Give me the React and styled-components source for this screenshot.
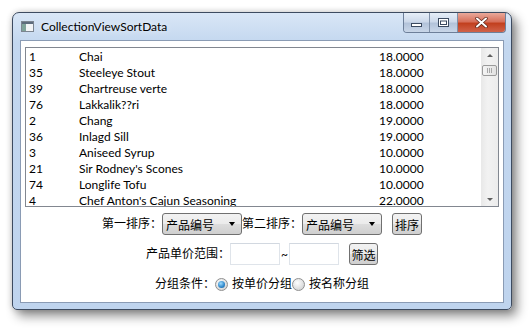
import React from 'react';
import styled, { createGlobalStyle } from 'styled-components';

const GlobalStyle = createGlobalStyle`
  html, body {
    margin: 0;
    padding: 0;
    background: #ffffff;
  }
  body {
    font: 12px "Lato", "Noto Sans CJK SC", sans-serif;
    color: #000;
  }
`;

const Desktop = styled.div`
  padding: 12px;
  width: 532px;
  height: 332px;
  box-sizing: border-box;
`;

const Window = styled.div`
  width: 500px;
  height: 298px;
  box-sizing: border-box;
  border: 1px solid #3d4b60;
  border-radius: 7px 7px 5px 5px;
  background: linear-gradient(#d9e6f6, #c3d7ef 30px, #bfd4ee);
  box-shadow: 5px 6px 11px rgba(0, 0, 0, 0.45), 0 0 6px rgba(0, 0, 0, 0.18);
  display: flex;
  flex-direction: column;
`;

const TitleBar = styled.div`
  height: 27px;
  display: flex;
  align-items: center;
  padding-left: 8px;
  flex-shrink: 0;
`;

const TitleText = styled.span`
  margin-left: 7px;
  font-size: 12px;
  color: #000;
  text-shadow: 0 0 6px rgba(255, 255, 255, 0.9);
`;

const Caption = styled.div`
  margin-left: auto;
  margin-right: 5px;
  align-self: flex-start;
  display: flex;
  height: 19px;
  border: 1px solid #6d7f99;
  border-top: none;
  border-radius: 0 0 4px 4px;
  overflow: hidden;
`;

const CapButton = styled.div`
  width: ${p => p.$w}px;
  height: 100%;
  display: flex;
  align-items: center;
  justify-content: center;
  box-sizing: border-box;
  border-left: ${p => (p.$first ? 'none' : '1px solid #7f90a8')};
  background: ${p =>
    p.$close
      ? 'linear-gradient(#e9a99b, #d7705b 45%, #c2401f 55%, #d0624a)'
      : 'linear-gradient(#e6eef8, #cdd9ea 45%, #b3c3da 55%, #c8d6e8)'};
`;

const ListBox = styled.div`
  margin: 6px 4px 0 4px;
  height: 160px;
  box-sizing: border-box;
  border: 1px solid #828790;
  display: flex;
  overflow: hidden;
  flex-shrink: 0;
`;

const Rows = styled.div`
  flex: 1;
  padding-top: 1px;
`;

const Row = styled.div`
  display: flex;
  height: 16px;
  line-height: 16px;
  padding-left: 3px;
  white-space: nowrap;
`;

const Cell = styled.span`
  width: ${p => p.$w}px;
  flex-shrink: 0;
`;

const ScrollBar = styled.div`
  width: 17px;
  flex-shrink: 0;
  background: linear-gradient(90deg, #e8e8e8, #f2f2f2 40%, #ececec);
  display: flex;
  flex-direction: column;
  align-items: center;
`;

const Arrow = styled.div`
  width: 0;
  height: 0;
  border-left: 3px solid transparent;
  border-right: 3px solid transparent;
  ${p =>
    p.$down
      ? 'border-top: 3px solid #606060; margin-top: auto; margin-bottom: 5px;'
      : 'border-bottom: 3px solid #606060; margin-top: 6px;'}
`;

const Thumb = styled.div`
  margin-top: 8px;
  width: 15px;
  height: 11px;
  box-sizing: border-box;
  border: 1px solid #9a9a9a;
  border-radius: 2px;
  background: linear-gradient(90deg, #f4f4f4, #e2e2e2);
  display: flex;
  justify-content: center;
  align-items: center;
  gap: 1px;
  & > i {
    width: 1px;
    height: 5px;
    background: #a8a8a8;
  }
`;

const Client = styled.div`
  flex: 1;
  margin: 0 7px 6px 7px;
  background: #fff;
  border: 1px solid #8a9bb4;
  display: flex;
  flex-direction: column;
  align-items: stretch;
`;

const ControlRow = styled.div`
  display: flex;
  justify-content: center;
  align-items: center;
  margin-top: ${p => p.$top}px;
  height: ${p => p.$h}px;
  white-space: nowrap;
`;

const Label = styled.span`
  line-height: 16px;
`;

const Combo = styled.div`
  width: 80px;
  height: 22px;
  box-sizing: border-box;
  border: 1px solid #707070;
  border-radius: 3px;
  background: linear-gradient(#f2f2f2, #ebebeb 50%, #dddddd 50%, #cfcfcf);
  display: flex;
  align-items: center;
  padding: 0 6px 0 3px;
`;

const ComboArrow = styled.span`
  margin-left: auto;
  width: 0;
  height: 0;
  border-left: 3.5px solid transparent;
  border-right: 3.5px solid transparent;
  border-top: 4px solid #000;
`;

const Button = styled.div`
  width: ${p => p.$w}px;
  height: 22px;
  margin-left: ${p => p.$ml}px;
  box-sizing: border-box;
  border: 1px solid #707070;
  border-radius: 3px;
  background: linear-gradient(#f2f2f2, #ebebeb 50%, #dddddd 50%, #cfcfcf);
  display: flex;
  align-items: center;
  justify-content: center;
`;

const TextBox = styled.div`
  width: 50px;
  height: 22px;
  box-sizing: border-box;
  border: 1px solid #dfe4ea;
  border-top-color: #d2d8e0;
  background: #fff;
`;

const Tilde = styled.span`
  width: 9px;
  text-align: center;
  font-family: "Lato", sans-serif;
`;

const Radio = styled.span`
  width: 13px;
  height: 13px;
  box-sizing: border-box;
  border-radius: 50%;
  border: 1px solid #8f8f8f;
  background: radial-gradient(circle at 40% 35%, #ffffff, #d9d9d9 70%, #cfcfcf);
  display: inline-flex;
  align-items: center;
  justify-content: center;
  margin-right: 4px;
  &::after {
    content: '';
    display: ${p => (p.$checked ? 'block' : 'none')};
    width: 7px;
    height: 7px;
    border-radius: 50%;
    background: radial-gradient(circle at 40% 35%, #9fdcff, #2d86c9 60%, #1a5a96);
  }
`;

const products = [
  [1, 'Chai', '18.0000'],
  [35, 'Steeleye Stout', '18.0000'],
  [39, 'Chartreuse verte', '18.0000'],
  [76, 'Lakkalik??ri', '18.0000'],
  [2, 'Chang', '19.0000'],
  [36, 'Inlagd Sill', '19.0000'],
  [3, 'Aniseed Syrup', '10.0000'],
  [21, "Sir Rodney's Scones", '10.0000'],
  [74, 'Longlife Tofu', '10.0000'],
  [4, "Chef Anton's Cajun Seasoning", '22.0000'],
];

const AppIcon = () => (
  <svg width="13" height="11" viewBox="0 0 13 11">
    <rect x="0.5" y="0.5" width="12" height="10" fill="#fff" stroke="#7c8590" />
    <rect x="1" y="1" width="11" height="2" fill="#5d6b7c" />
    <rect x="1" y="3" width="4" height="7" fill="#7fa39a" />
    <rect x="5" y="3" width="7" height="7" fill="#f2f4f6" />
  </svg>
);

const App = () => (
  <>
    <GlobalStyle />
    <Desktop>
      <Window>
        <TitleBar>
          <AppIcon />
          <TitleText>CollectionViewSortData</TitleText>
          <Caption>
            <CapButton $w={25} $first>
              <svg width="11" height="9" viewBox="0 0 11 9">
                <rect x="0.5" y="5.5" width="10" height="3" fill="#fff" stroke="#3b4a60" />
              </svg>
            </CapButton>
            <CapButton $w={28}>
              <svg width="11" height="9" viewBox="0 0 11 9">
                <rect x="0.5" y="0.5" width="10" height="8" fill="#fff" stroke="#3b4a60" />
                <rect x="2.5" y="3" width="6" height="3.5" fill="none" stroke="#3b4a60" />
              </svg>
            </CapButton>
            <CapButton $w={48} $close>
              <svg width="13" height="11" viewBox="0 0 13 11">
                <path d="M2 1.5 L11 9.5 M11 1.5 L2 9.5" stroke="#5a2418" strokeWidth="3.4" strokeLinecap="round" />
                <path d="M2 1.5 L11 9.5 M11 1.5 L2 9.5" stroke="#fff" strokeWidth="2" strokeLinecap="round" />
              </svg>
            </CapButton>
          </Caption>
        </TitleBar>
        <Client>
          <ListBox>
            <Rows>
              {products.map(([id, name, price]) => (
                <Row key={id}>
                  <Cell $w={50}>{id}</Cell>
                  <Cell $w={300}>{name}</Cell>
                  <Cell $w={60}>{price}</Cell>
                </Row>
              ))}
            </Rows>
            <ScrollBar>
              <Arrow />
              <Thumb>
                <i />
                <i />
                <i />
              </Thumb>
              <Arrow $down />
            </ScrollBar>
          </ListBox>
          <ControlRow $top={6} $h={22}>
            <Label>第一排序：</Label>
            <Combo>
              产品编号
              <ComboArrow />
            </Combo>
            <Label>第二排序：</Label>
            <Combo>
              产品编号
              <ComboArrow />
            </Combo>
            <Button $w={30} $ml={10}>排序</Button>
          </ControlRow>
          <ControlRow $top={8} $h={22}>
            <Label>产品单价范围：</Label>
            <TextBox />
            <Tilde>~</Tilde>
            <TextBox />
            <Button $w={29} $ml={10}>筛选</Button>
          </ControlRow>
          <ControlRow $top={11} $h={16}>
            <Label>分组条件：</Label>
            <Radio $checked />
            <Label>按单价分组</Label>
            <Radio />
            <Label>按名称分组</Label>
          </ControlRow>
        </Client>
      </Window>
    </Desktop>
  </>
);

export default App;
